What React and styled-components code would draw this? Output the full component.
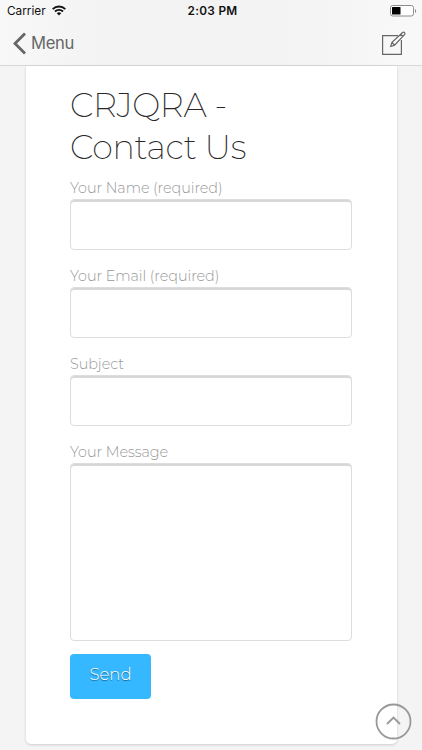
import React from 'react';
import styled, { createGlobalStyle } from 'styled-components';
import { useState } from 'react';

const GlobalStyle = createGlobalStyle`
    * {
        box-sizing: border-box;
    }

    body {
        margin: 0;
        background: #f4f4f4;
        font-family: Montserrat, Inter, 'Liberation Sans', sans-serif;
    }
`;

const Screen = styled.div`
    display: flex;
    flex-direction: column;
    position: relative;
    width: 422px;
    height: 750px;
    overflow: hidden;
    background: #f4f4f4;
`;

const Header = styled.header`
    flex: none;
    height: 66px;
    background: linear-gradient(90deg, #f8f8f8 0, #f3f3f3 100px, #f3f3f3 290px, #f8f8f8 400px);
    border-bottom: 1px solid #d8d8d8;
    font-family: Inter, 'Liberation Sans', sans-serif;
`;

const StatusBar = styled.div`
    display: grid;
    grid-template-columns: 1fr auto 1fr;
    align-items: center;
    height: 21px;
    padding: 0 5px 0 7px;
    color: #111;
    font-size: 11.8px;
`;

const Carrier = styled.div`
    display: flex;
    align-items: center;
    gap: 6px;
`;

const Time = styled.div`
    font-weight: 600;
    letter-spacing: 0.3px;
    transform: translateX(0.5px);
`;

const Battery = styled.svg`
    justify-self: end;
`;

const NavBar = styled.nav`
    display: flex;
    justify-content: space-between;
    align-items: center;
    height: 44px;
    padding: 0 16px 0 12px;
`;

const Back = styled.button`
    display: flex;
    align-items: center;
    gap: 4px;
    padding: 0;
    border: none;
    background: none;
    color: #666;
    font-family: inherit;
    font-size: 16.6px;
    letter-spacing: -0.3px;
`;

const Card = styled.main`
    flex: none;
    width: 371px;
    height: 678px;
    margin-left: 26px;
    padding: 18px 45px 0 44px;
    background: #fff;
    border-radius: 0 0 5px 5px;
    box-shadow: 0 1px 3px rgba(0, 0, 0, 0.16);
`;

const Title = styled.h1`
    margin: 0 0 1px;
    color: #272727;
    font-size: 33.4px;
    font-weight: 200;
    line-height: 42px;
    letter-spacing: -0.35px;
`;

const Field = styled.label`
    display: block;
    height: ${props => props.$height || 88}px;
    padding-top: 8px;
`;

const Label = styled.span`
    display: block;
    height: 22px;
    color: #999;
    font-size: 14.4px;
    font-weight: 300;
    line-height: 22px;
    letter-spacing: -0.07px;
    white-space: nowrap;
`;

const Input = styled.input`
    display: block;
    width: 282px;
    height: 51px;
    padding: 0 12px;
    background: #fff;
    border: 1px solid #ddd;
    border-radius: 4px;
    box-shadow: inset 0 2px 0 #d7d7d7;
    outline: none;
    font-size: 14px;
`;

const TextArea = styled(Input)`
    height: 178px;
    padding: 12px;
    resize: none;
`;

const Send = styled.button`
    display: block;
    width: 81px;
    height: 45px;
    margin-top: 14px;
    padding: 0 0 5px;
    background: #35b8ff;
    border: none;
    border-radius: 4px;
    color: #fff;
    font-family: inherit;
    font-size: 16.5px;
    font-weight: 300;
    letter-spacing: 0;
    text-shadow: 0 1px 1px rgba(0, 0, 0, 0.45);
`;

const ScrollTop = styled.button`
    position: absolute;
    right: 10px;
    bottom: 10px;
    width: 37px;
    height: 37px;
    padding: 0;
    background: none;
    border: none;
`;

const WifiIcon = () => (
    <svg width="14" height="11" viewBox="0 0 14 11" fill="none" stroke="#111" strokeWidth="1.9">
        <path d="M.7 4.1a9 9 0 0 1 12.6 0M3 6.5a5.7 5.7 0 0 1 8 0" />
        <path d="M4.8 8.3a3.2 3.2 0 0 1 4.4 0L7 10.5z" fill="#111" stroke="none" />
    </svg>
);

const BatteryIcon = () => (
    <Battery width="27" height="12" viewBox="0 0 27 12">
        <rect x=".5" y=".5" width="23" height="10.5" rx="2.3" fill="#fff" stroke="#8c8c8c" />
        <rect x="2" y="2" width="8.5" height="7.5" rx=".6" fill="#000" />
        <path d="M25 4v4c1.6-.6 1.6-3.4 0-4z" fill="#8c8c8c" />
    </Battery>
);

const BackIcon = () => (
    <svg width="15" height="23" viewBox="0 0 15 23" fill="none" stroke="#666" strokeWidth="2.8">
        <path d="M13 1.5 3 11.5l10 10" />
    </svg>
);

const ComposeIcon = () => (
    <svg width="25" height="25" viewBox="0 0 25 25" fill="none" stroke="#666" strokeWidth="1.2">
        <path d="M17 4.6H1.6v18.8h18.8V9" />
        <path d="m9.7 15.4 1.3-4L21.3 1.7q1.2-1 2.2 0t0 2L13.6 14.2zM11 11.4l2.6 2.8M19.6 3.2l2.5 2.5" />
    </svg>
);

const fields = [
    { name: 'name', label: 'Your Name (required)' },
    { name: 'email', label: 'Your Email (required)' },
    { name: 'subject', label: 'Subject' },
    { name: 'message', label: 'Your Message', multiline: true },
];

const App = () => {
    const [form, setForm] = useState({ name: "", email: "", subject: "", message: "" });

    const update = (e) => {
        setForm({ ...form, [e.target.name]: e.target.value });
    }

    return (
        <Screen>
            <GlobalStyle />
            <Header>
                <StatusBar>
                    <Carrier>Carrier <WifiIcon /></Carrier>
                    <Time>2:03 PM</Time>
                    <BatteryIcon />
                </StatusBar>
                <NavBar>
                    <Back><BackIcon />Menu</Back>
                    <ComposeIcon />
                </NavBar>
            </Header>

            <Card>
                <Title>CRJQRA -<br />Contact Us</Title>
                {
                    fields.map(field => (
                        <Field key={field.name} $height={field.multiline ? 207 : 88}>
                            <Label>{field.label}</Label>
                            {field.multiline
                                ? <TextArea as="textarea" name={field.name} value={form[field.name]} onChange={update} />
                                : <Input name={field.name} value={form[field.name]} onChange={update} />}
                        </Field>
                    ))
                }
                <Send type="button">Send</Send>
            </Card>

            <ScrollTop aria-label="Back to top">
                <svg width="37" height="37" viewBox="0 0 37 37" fill="none" stroke="#999" strokeWidth="1.8">
                    <circle cx="18.5" cy="18.5" r="17" />
                    <path d="m12 21 6.5-6.5L25 21" />
                </svg>
            </ScrollTop>
        </Screen>
    )
}

export default App;
